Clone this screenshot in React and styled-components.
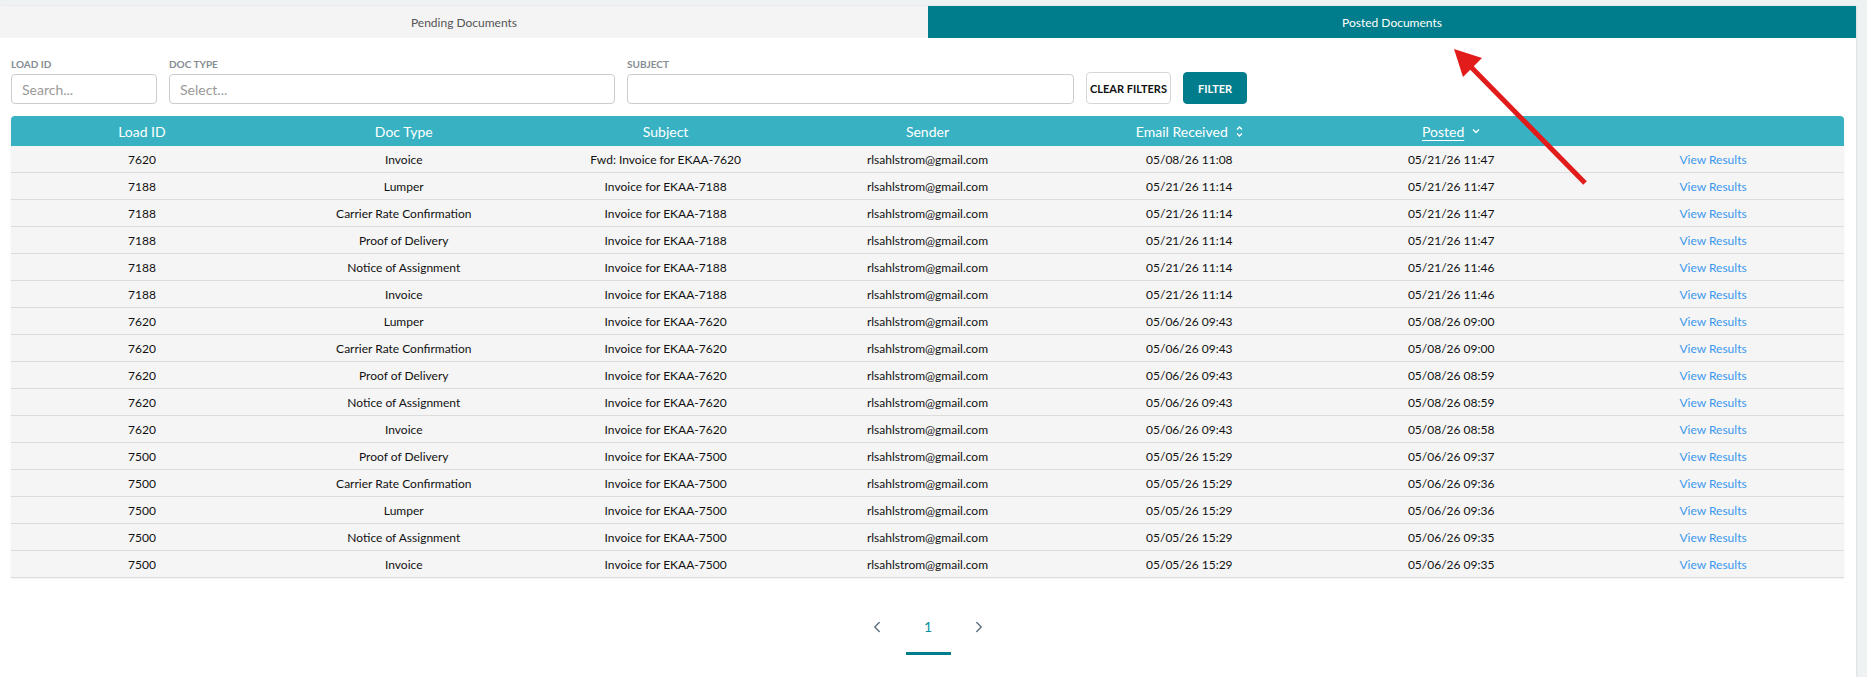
import React from "react";
import styled, { createGlobalStyle } from "styled-components";
import { ChevronLeft, ChevronRight } from "lucide-react";

const rows = [
  ["7620", "Invoice", "Fwd: Invoice for EKAA-7620", "05/08/26 11:08", "05/21/26 11:47"],
  ["7188", "Lumper", "Invoice for EKAA-7188", "05/21/26 11:14", "05/21/26 11:47"],
  ["7188", "Carrier Rate Confirmation", "Invoice for EKAA-7188", "05/21/26 11:14", "05/21/26 11:47"],
  ["7188", "Proof of Delivery", "Invoice for EKAA-7188", "05/21/26 11:14", "05/21/26 11:47"],
  ["7188", "Notice of Assignment", "Invoice for EKAA-7188", "05/21/26 11:14", "05/21/26 11:46"],
  ["7188", "Invoice", "Invoice for EKAA-7188", "05/21/26 11:14", "05/21/26 11:46"],
  ["7620", "Lumper", "Invoice for EKAA-7620", "05/06/26 09:43", "05/08/26 09:00"],
  ["7620", "Carrier Rate Confirmation", "Invoice for EKAA-7620", "05/06/26 09:43", "05/08/26 09:00"],
  ["7620", "Proof of Delivery", "Invoice for EKAA-7620", "05/06/26 09:43", "05/08/26 08:59"],
  ["7620", "Notice of Assignment", "Invoice for EKAA-7620", "05/06/26 09:43", "05/08/26 08:59"],
  ["7620", "Invoice", "Invoice for EKAA-7620", "05/06/26 09:43", "05/08/26 08:58"],
  ["7500", "Proof of Delivery", "Invoice for EKAA-7500", "05/05/26 15:29", "05/06/26 09:37"],
  ["7500", "Carrier Rate Confirmation", "Invoice for EKAA-7500", "05/05/26 15:29", "05/06/26 09:36"],
  ["7500", "Lumper", "Invoice for EKAA-7500", "05/05/26 15:29", "05/06/26 09:36"],
  ["7500", "Notice of Assignment", "Invoice for EKAA-7500", "05/05/26 15:29", "05/06/26 09:35"],
  ["7500", "Invoice", "Invoice for EKAA-7500", "05/05/26 15:29", "05/06/26 09:35"],
];

const SENDER = "rlsahlstrom@gmail.com";

const GlobalStyle = createGlobalStyle`
  body {
    margin: 0;
    background: #eef2f3;
    font-family: Lato, "Open Sans", sans-serif;
  }
`;

const Page = styled.div`
  position: relative;
  padding: 6px 11px 0 0;
  min-height: 100vh;
  box-sizing: border-box;
`;

const Panel = styled.div`
  background: #fff;
  min-height: calc(100vh - 6px);
  box-shadow: 1px 0 2px rgba(0, 0, 0, 0.08);
`;

const Tabs = styled.div`
  display: grid;
  grid-template-columns: 1fr 1fr;
  height: 32px;
`;

const Tab = styled.div`
  display: flex;
  align-items: center;
  justify-content: center;
  font-size: 12px;
  background: ${(p) => (p.$active ? "#007d8c" : "#f4f4f4")};
  color: ${(p) => (p.$active ? "#fff" : "#555")};
`;

const Filters = styled.div`
  display: flex;
  align-items: flex-end;
  gap: 12px;
  padding: 20px 12px 0 11px;
`;

const Field = styled.div`
  display: flex;
  flex-direction: column;
  gap: 4px;
  width: ${(p) => p.$w}px;
`;

const Label = styled.label`
  font-size: 10px;
  line-height: 12px;
  font-weight: 700;
  color: #858c93;
  text-transform: uppercase;
`;

const Input = styled.input`
  box-sizing: border-box;
  height: 30px;
  width: 100%;
  border: 1px solid #ccc;
  border-radius: 4px;
  padding: 0 10px;
  font-family: inherit;
  font-size: 14px;
  color: #333;
  &::placeholder {
    color: #9a9a9a;
  }
`;

const Button = styled.button`
  box-sizing: border-box;
  height: 32px;
  border-radius: 4px;
  font-family: inherit;
  font-size: 11px;
  font-weight: 700;
  text-transform: uppercase;
  padding: 0 ${(p) => (p.$primary ? 14 : 3)}px;
  border: 1px solid ${(p) => (p.$primary ? "#007d8c" : "#d6d6d6")};
  background: ${(p) => (p.$primary ? "#007d8c" : "#fff")};
  color: ${(p) => (p.$primary ? "#fff" : "#111")};
`;

const Table = styled.table`
  width: calc(100% - 23px);
  margin: 12px 12px 0 11px;
  border-collapse: collapse;
  table-layout: fixed;
  font-size: 12px;
  box-shadow: 0 1px 2px rgba(0, 0, 0, 0.06);
`;

const Th = styled.th`
  height: 30px;
  padding: 0;
  background: #38b2c3;
  color: #fff;
  font-weight: 400;
  font-size: 14px;
  text-align: center;
  &:first-child { border-top-left-radius: 4px; }
  &:last-child { border-top-right-radius: 4px; }
`;

const HeadLabel = styled.span`
  display: inline-flex;
  align-items: center;
  gap: 8px;
  u { text-underline-offset: 3px; }
`;

const Tr = styled.tr`
  background: #f5f5f5;
  border-bottom: 1px solid #dcdcdc;
`;

const Td = styled.td`
  height: 26px;
  padding: 0;
  text-align: center;
  color: #111;
  white-space: nowrap;
`;

const Link = styled.a`
  color: #3b97ee;
  text-decoration: none;
`;

const Pager = styled.div`
  display: flex;
  justify-content: center;
  gap: 6px;
  margin-top: 37px;
`;

const PageItem = styled.div`
  box-sizing: border-box;
  width: 45px;
  height: 40px;
  display: flex;
  justify-content: center;
  padding-top: 1px;
  line-height: 22px;
  font-size: 14px;
  color: ${(p) => (p.$current ? "#0a8fa1" : "#5c6b7a")};
  border-bottom: 3px solid ${(p) => (p.$current ? "#007d8c" : "transparent")};
`;

const Overlay = styled.svg`
  position: absolute;
  left: 0;
  top: 0;
  pointer-events: none;
`;

const SortBoth = () => (
  <svg width="7" height="11" viewBox="0 0 7 11" fill="none" stroke="#fff" strokeWidth="1.3">
    <path d="M1 3.5 L3.5 1 L6 3.5" />
    <path d="M1 7.5 L3.5 10 L6 7.5" />
  </svg>
);

const SortDown = () => (
  <svg width="8" height="6" viewBox="0 0 8 6" fill="none" stroke="#fff" strokeWidth="1.3">
    <path d="M1 1.5 L4 4.5 L7 1.5" />
  </svg>
);

export default function App() {
  return (
    <>
      <GlobalStyle />
      <Page>
        <Panel>
          <Tabs>
            <Tab>Pending Documents</Tab>
            <Tab $active>Posted Documents</Tab>
          </Tabs>

          <Filters>
            <Field $w={146}>
              <Label>Load ID</Label>
              <Input placeholder="Search..." />
            </Field>
            <Field $w={446}>
              <Label>Doc Type</Label>
              <Input placeholder="Select..." />
            </Field>
            <Field $w={447}>
              <Label>Subject</Label>
              <Input />
            </Field>
            <Button>Clear Filters</Button>
            <Button $primary>Filter</Button>
          </Filters>

          <Table>
            <thead>
              <tr>
                <Th>Load ID</Th>
                <Th>Doc Type</Th>
                <Th>Subject</Th>
                <Th>Sender</Th>
                <Th>
                  <HeadLabel>Email Received <SortBoth /></HeadLabel>
                </Th>
                <Th>
                  <HeadLabel><u>Posted</u> <SortDown /></HeadLabel>
                </Th>
                <Th />
              </tr>
            </thead>
            <tbody>
              {rows.map((r, i) => (
                <Tr key={i}>
                  <Td>{r[0]}</Td>
                  <Td>{r[1]}</Td>
                  <Td>{r[2]}</Td>
                  <Td>{SENDER}</Td>
                  <Td>{r[3]}</Td>
                  <Td>{r[4]}</Td>
                  <Td><Link href="#">View Results</Link></Td>
                </Tr>
              ))}
            </tbody>
          </Table>

          <Pager>
            <PageItem><ChevronLeft size={18} strokeWidth={1.8} style={{ marginTop: 2 }} /></PageItem>
            <PageItem $current>1</PageItem>
            <PageItem><ChevronRight size={18} strokeWidth={1.8} style={{ marginTop: 2 }} /></PageItem>
          </Pager>
        </Panel>

        {/* red annotation arrow */}
        <Overlay width="1867" height="677">
          <line x1="1585" y1="183" x2="1471" y2="67" stroke="#e21b1b" strokeWidth="5" />
          <polygon points="1454,49 1463,77 1482,58" fill="#e21b1b" />
        </Overlay>
      </Page>
    </>
  );
}
